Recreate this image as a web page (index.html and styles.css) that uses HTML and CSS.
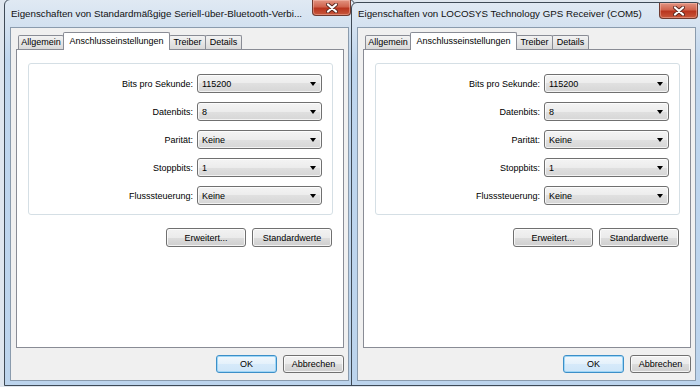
FILE: index.html
```html
<!DOCTYPE html>
<html lang="de">
<head>
  <meta charset="UTF-8" />
  <title>Eigenschaften</title>
  <link rel="stylesheet" href="styles.css">
</head>
<body>

  <!-- Left dialog -->
  <div class="window w1">
    <div class="titlebar">
      <span class="title">Eigenschaften von Standardmäßgige Seriell-über-Bluetooth-Verbi...</span>
      <span class="close">
        <svg width="12" height="10" viewBox="0 0 12 10">
          <path d="M2 1.5 L10 8.5 M10 1.5 L2 8.5" stroke="#5b2a22" stroke-width="4" stroke-linecap="round"/>
          <path d="M2 1.5 L10 8.5 M10 1.5 L2 8.5" stroke="#fff" stroke-width="2.2" stroke-linecap="round"/>
        </svg>
      </span>
    </div>
    <div class="client">
      <div class="tabs">
        <span class="tab tab-allg">Allgemein</span>
        <span class="tab tab-ansch active">Anschlusseinstellungen</span>
        <span class="tab tab-treib">Treiber</span>
        <span class="tab tab-det">Details</span>
      </div>
      <div class="panel">
        <div class="group">
          <div class="row"><span class="label">Bits pro Sekunde:</span><div class="combo"><span>115200</span><i class="arrow"></i></div></div>
          <div class="row"><span class="label">Datenbits:</span><div class="combo"><span>8</span><i class="arrow"></i></div></div>
          <div class="row"><span class="label">Parität:</span><div class="combo"><span>Keine</span><i class="arrow"></i></div></div>
          <div class="row"><span class="label">Stoppbits:</span><div class="combo"><span>1</span><i class="arrow"></i></div></div>
          <div class="row"><span class="label">Flusssteuerung:</span><div class="combo"><span>Keine</span><i class="arrow"></i></div></div>
        </div>
        <div class="panel-buttons">
          <button class="btn wide">Erweitert...</button>
          <button class="btn wide">Standardwerte</button>
        </div>
      </div>
      <div class="dialog-buttons">
        <button class="btn small default">OK</button>
        <button class="btn small">Abbrechen</button>
      </div>
    </div>
  </div>

  <!-- Right dialog -->
  <div class="window w2">
    <div class="titlebar">
      <span class="title">Eigenschaften von LOCOSYS Technology GPS Receiver (COM5)</span>
      <span class="close">
        <svg width="12" height="10" viewBox="0 0 12 10">
          <path d="M2 1.5 L10 8.5 M10 1.5 L2 8.5" stroke="#5b2a22" stroke-width="4" stroke-linecap="round"/>
          <path d="M2 1.5 L10 8.5 M10 1.5 L2 8.5" stroke="#fff" stroke-width="2.2" stroke-linecap="round"/>
        </svg>
      </span>
    </div>
    <div class="client">
      <div class="tabs">
        <span class="tab tab-allg">Allgemein</span>
        <span class="tab tab-ansch active">Anschlusseinstellungen</span>
        <span class="tab tab-treib">Treiber</span>
        <span class="tab tab-det">Details</span>
      </div>
      <div class="panel">
        <div class="group">
          <div class="row"><span class="label">Bits pro Sekunde:</span><div class="combo"><span>115200</span><i class="arrow"></i></div></div>
          <div class="row"><span class="label">Datenbits:</span><div class="combo"><span>8</span><i class="arrow"></i></div></div>
          <div class="row"><span class="label">Parität:</span><div class="combo"><span>Keine</span><i class="arrow"></i></div></div>
          <div class="row"><span class="label">Stoppbits:</span><div class="combo"><span>1</span><i class="arrow"></i></div></div>
          <div class="row"><span class="label">Flusssteuerung:</span><div class="combo"><span>Keine</span><i class="arrow"></i></div></div>
        </div>
        <div class="panel-buttons">
          <button class="btn wide">Erweitert...</button>
          <button class="btn wide">Standardwerte</button>
        </div>
      </div>
      <div class="dialog-buttons">
        <button class="btn small default">OK</button>
        <button class="btn small">Abbrechen</button>
      </div>
    </div>
  </div>

</body>
</html>
```

FILE: styles.css
```css
body {
  margin: 0;
  width: 700px;
  height: 387px;
  overflow: hidden;
  display: flex;
  align-items: flex-start;
  background: #dfe6ee;
  font-family: 'Liberation Sans', Arial, sans-serif;
  font-size: 9px;
  color: #000;
}

/* Window frame */
.window {
  box-sizing: border-box;
  width: 351px;
  display: flex;
  flex-direction: column;
  flex-shrink: 0;
  border: 1px solid #3f4a56;
  border-radius: 6px 6px 0 0;
  padding: 0 5px 4px;
  background: linear-gradient(#e0e9f3, #d3e1f0 26px, #bfd6ee 60px, #bcd4ed);
}

.w1 {
  margin-left: 4px;
  margin-top: -1px;
  height: 387px;
}

.w2 {
  margin-left: -4px;
  margin-top: 2px;
  height: 384px;
}

.titlebar {
  display: flex;
  align-items: flex-start;
}

.w1 .titlebar { height: 27px; }
.w2 .titlebar { height: 24px; }

.title {
  flex: 1;
  margin-left: 1px;
  font-size: 9.75px;
  line-height: 16px;
  white-space: nowrap;
  overflow: hidden;
  color: #111;
}

.w1 .title { margin-top: 6px; }
.w2 .title { margin-top: 3px; }

.close {
  box-sizing: border-box;
  width: 39px;
  height: 16px;
  margin-right: -2px;
  display: flex;
  justify-content: center;
  align-items: center;
  border: 1px solid #6e3a30;
  border-top: none;
  border-radius: 0 0 4px 4px;
  background: linear-gradient(#e29482, #d0644e 45%, #b9351f 55%, #c8583c);
  box-shadow: inset 0 0 0 1px rgba(255, 210, 200, 0.4);
}

/* Client area */
.client {
  flex: 1;
  display: flex;
  flex-direction: column;
  border: 1px solid #8a9bad;
  background: #f0f0f0;
}

.tabs {
  position: relative;
  z-index: 1;
  display: flex;
  align-items: flex-end;
  height: 17px;
  margin: 4px 0 0 7px;
}

.tab {
  box-sizing: border-box;
  height: 14px;
  line-height: 13px;
  text-align: center;
  border: 1px solid #898c95;
  border-bottom: none;
  border-radius: 2px 2px 0 0;
  background: linear-gradient(#f3f3f3, #e6e6e6 50%, #d9d9d9);
  white-space: nowrap;
}

.tab + .tab { margin-left: -1px; }

.tab-allg { width: 46px; }
.tab-ansch { width: 107px; }
.tab-treib { width: 37px; }
.tab-det { width: 37px; }

.tab.active {
  height: 18px;
  margin-bottom: -1px;
  padding-top: 2px;
  background: #fff;
}

.panel {
  box-sizing: border-box;
  width: 328px;
  flex: 1;
  margin-left: 5px;
  display: flex;
  flex-direction: column;
  padding: 13px 10px 0 11px;
  border: 1px solid #898c95;
  background: #fff;
}

.group {
  display: flex;
  flex-direction: column;
  gap: 9px;
  padding: 10px 10px 9px 0;
  border: 1px solid #d5dfe5;
  border-radius: 3px;
}

.row {
  display: flex;
  justify-content: flex-end;
  align-items: center;
  gap: 4px;
}

.combo {
  box-sizing: border-box;
  width: 125px;
  height: 19px;
  display: flex;
  align-items: center;
  justify-content: space-between;
  padding: 0 5px 0 4px;
  border: 1px solid #707070;
  border-radius: 3px;
  background: linear-gradient(#f4f4f4, #ececec 50%, #e0e0e0 50%, #d6d6d6);
  box-shadow: inset 0 0 0 1px rgba(255, 255, 255, 0.7);
}

.arrow {
  width: 0;
  height: 0;
  border-left: 3.5px solid transparent;
  border-right: 3.5px solid transparent;
  border-top: 4px solid #000;
}

.panel-buttons {
  display: flex;
  justify-content: flex-end;
  gap: 6px;
  margin-top: 13px;
  padding-right: 1px;
}

.btn {
  box-sizing: border-box;
  height: 19px;
  padding: 0;
  font: inherit;
  color: #000;
  border: 1px solid #707070;
  border-radius: 3px;
  background: linear-gradient(#f2f2f2, #ebebeb 50%, #dddddd 50%, #cfcfcf);
  box-shadow: inset 0 0 0 1px rgba(255, 255, 255, 0.75);
}

.wide { width: 80px; }

.small {
  width: 61px;
  height: 18px;
}

.btn.default {
  border-color: #3c8fc8;
  background: linear-gradient(#f2f8fd, #e4f1fb 50%, #d6eafa 50%, #cfe6f8);
  box-shadow: inset 0 0 0 1px #9fd6f6;
}

.dialog-buttons {
  display: flex;
  justify-content: flex-end;
  gap: 6px;
  padding: 7px 4px 7px 0;
}
```
